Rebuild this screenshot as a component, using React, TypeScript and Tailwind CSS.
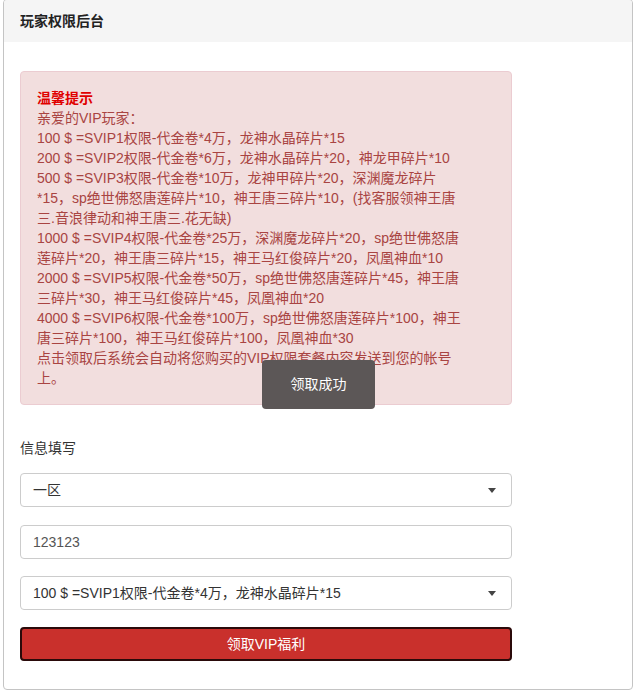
const lines = [
  "亲爱的VIP玩家：",
  "100 $ =SVIP1权限-代金卷*4万，龙神水晶碎片*15",
  "200 $ =SVIP2权限-代金卷*6万，龙神水晶碎片*20，神龙甲碎片*10",
  "500 $ =SVIP3权限-代金卷*10万，龙神甲碎片*20，深渊魔龙碎片",
  "*15，sp绝世佛怒唐莲碎片*10，神王唐三碎片*10，(找客服领神王唐",
  "三.音浪律动和神王唐三.花无缺)",
  "1000 $ =SVIP4权限-代金卷*25万，深渊魔龙碎片*20，sp绝世佛怒唐",
  "莲碎片*20，神王唐三碎片*15，神王马红俊碎片*20，凤凰神血*10",
  "2000 $ =SVIP5权限-代金卷*50万，sp绝世佛怒唐莲碎片*45，神王唐",
  "三碎片*30，神王马红俊碎片*45，凤凰神血*20",
  "4000 $ =SVIP6权限-代金卷*100万，sp绝世佛怒唐莲碎片*100，神王",
  "唐三碎片*100，神王马红俊碎片*100，凤凰神血*30",
  "点击领取后系统会自动将您购买的VIP权限套餐内容发送到您的帐号",
  "上。",
];

const Caret = () => (
  <svg width="8" height="5" viewBox="0 0 8 5" className="shrink-0">
    <path d="M0 0h8L4 5z" fill="#444" />
  </svg>
);

const App = () => {
  return (
    <div
      className="h-[693px] bg-white text-[14px] text-[#333]"
      style={{ fontFamily: '"Liberation Sans", "Noto Sans CJK SC", sans-serif' }}
    >
      <div className="relative ml-[3px] w-[630px] h-[691px] -mt-px border border-[#c4c4c4] rounded-[4px] overflow-hidden">
        <div className="h-[42px] bg-[#f5f5f5] flex items-center pl-[16px] font-bold text-[14px] text-[#222]">
          玩家权限后台
        </div>

        <div className="pl-[16px] pt-[29px] w-[508px]">
          <div className="w-[492px] bg-[#f2dede] border border-[#ebccd1] rounded-[4px] px-4 py-4 text-[#a94442] leading-[20px]">
            <div className="font-bold text-[#e00000]">温馨提示</div>
            {lines.map((line, i) => (
              <div key={i} className="whitespace-nowrap">
                {line}
              </div>
            ))}
          </div>

          <div className="mt-[33px] leading-[20px] text-[14px] text-[#333]">信息填写</div>

          <div className="mt-[15px] h-[34px] border border-[#ccc] rounded-[4px] flex items-center justify-between pl-[12px] pr-[15px] text-[#333]">
            <span>一区</span>
            <Caret />
          </div>

          <div className="mt-[18px] h-[34px] border border-[#ccc] rounded-[4px] flex items-center pl-[12px] text-[#555]">
            123123
          </div>

          <div className="mt-[17px] h-[34px] border border-[#ccc] rounded-[4px] flex items-center justify-between pl-[12px] pr-[15px] text-[#333]">
            <span className="whitespace-nowrap">100 $ =SVIP1权限-代金卷*4万，龙神水晶碎片*15</span>
            <Caret />
          </div>

          <button className="mt-[17px] w-full h-[34px] bg-[#c9302c] border-2 border-[#2a0a0a] rounded-[4px] text-white text-[14px] flex items-center justify-center">
            领取VIP福利
          </button>
        </div>

        <div className="absolute left-[258px] top-[360px] w-[113px] h-[49px] rounded-[4px] bg-[#5c5757] text-white flex items-center justify-center text-[14px]">
          领取成功
        </div>
      </div>
    </div>
  );
};

export default App;
